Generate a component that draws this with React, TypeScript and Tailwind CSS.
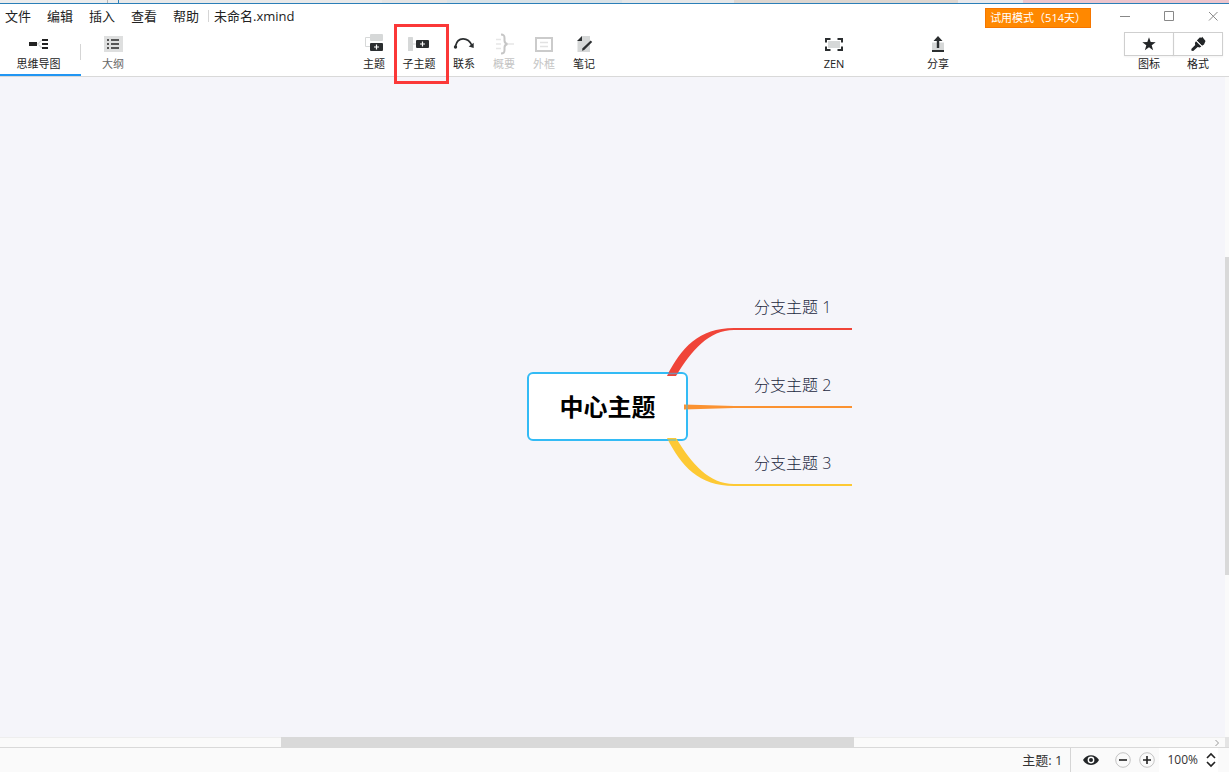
import type { ReactNode } from 'react';

const INK = '#2b2e30';
const PALE = '#d6d8d8';

function Icon({ children }: { children: ReactNode }) {
  return (
    <svg className="size-6 shrink-0" viewBox="0 0 24 24" fill="none" aria-hidden="true">
      {children}
    </svg>
  );
}

const MindMapIcon = () => (
  <Icon>
    <path d="M15 8.500c-2.500 0-2 3.500-5 3.500c3 0 2.500 3.500 5 3.500" stroke={PALE} strokeWidth="1.200" />
    <path d="M2 10h8v4H2zM15 7h6v2h-6zM15 11h6v2h-6zM15 15h6v2h-6z" fill="#222" />
  </Icon>
);

const OutlineIcon = () => (
  <Icon>
    <path d="M3 4h19v16H3z" fill="#dedfdf" />
    <path d="M6 7h2v2H6zM10 7h8v2h-8zM6 11h2v2H6zM10 11h8v2h-8zM6 15h2v2H6zM10 15h8v2h-8z" fill="#555" />
  </Icon>
);

const TopicIcon = () => (
  <Icon>
    <path d="M8 5.500H3.500v9H8" stroke={PALE} />
    <rect x="8" y="2" width="13" height="7" rx="1" fill={PALE} />
    <rect x="8" y="11" width="13" height="8" rx="1" fill={INK} />
    <path d="M14.500 12.500v5M12 15h5" stroke="#fff" strokeWidth="1.200" />
  </Icon>
);

const SubtopicIcon = () => (
  <Icon>
    <path d="M6 12h3" stroke={PALE} />
    <rect x="1" y="5" width="5" height="14" rx="0.500" fill={PALE} />
    <rect x="9" y="8" width="13" height="8" rx="1" fill={INK} />
    <path d="M15.500 9.500v5M13 12h5" stroke="#fff" strokeWidth="1.200" />
  </Icon>
);

const RelationIcon = () => (
  <Icon>
    <path d="M3.500 14C5.500 4.500 16 4.500 20 13.500" stroke={INK} strokeWidth="1.700" />
    <circle cx="3.500" cy="15" r="1.700" fill={INK} />
    <path d="M21.700 10.800v5.200l-5-1.400z" fill={INK} />
  </Icon>
);

const SummaryIcon = () => (
  <Icon>
    <path d="M4 7.500h5M4 12h5M4 16.500h5M16 12h6" stroke="#e6e6e6" strokeWidth="1.500" />
    <path d="M9 2.500c2.700 0 3.500.8 3.500 3.500v2.500c0 2 .8 3 3 3.500c-2.200.5-3 1.500-3 3.500V18c0 2.700-.8 3.500-3.500 3.500" stroke="#c6c6c6" strokeWidth="2" />
  </Icon>
);

const BoundaryIcon = () => (
  <Icon>
    <path d="M4 6h16v13H4z" stroke="#cbcbcb" strokeWidth="2" />
    <path d="M8 10.500h8M8 14.500h8" stroke="#e2e2e2" strokeWidth="1.500" />
  </Icon>
);

const NotesIcon = () => (
  <Icon>
    <path d="M10 4h8v16H5.500V9z" fill={PALE} />
    <path d="M10 4v5H5z" fill={INK} />
    <path d="M10 18.800l.5-2.500 8.200-7.800 1.500 1.600-8 7.900z" fill={INK} />
  </Icon>
);

const ZenIcon = () => (
  <Icon>
    <path d="M6 9h12v7H6z" fill={PALE} />
    <path d="M8.500 7H4v3.500M15.500 7H20v3.500M8.500 18H4v-3.500M15.500 18H20v-3.500" stroke={INK} strokeWidth="2" />
  </Icon>
);

const ShareIcon = () => (
  <Icon>
    <path d="M6 10.500h12V18H6z" fill={PALE} />
    <path d="M6 18h12v2H6zM12 4l4.500 5h-3.300v7h-2.400V9H7.500z" fill={INK} />
  </Icon>
);

const StarIcon = () => (
  <Icon>
    <path d="M12 5.300l1.700 4.800 5 .1-4 3.100 1.400 4.900L12 15.300l-4.100 2.900 1.400-4.900-4-3.100 5-.1z" fill="#222527" />
  </Icon>
);

const BrushIcon = () => (
  <Icon>
    <path d="M14 5.300l1.200.8 1-1.300 3.300 4.100-1.500 3.500-2 1.300-5.200-5.200z" fill="#222527" />
    <path d="M10 9.200l5.300 5.300-1.600 1-2-.5-4.500 3.900-1.700-.2-.2-1.700 3.900-4.100-.3-2z" fill="#222527" />
    <path d="M10.300 8.300l5.800 5.800" stroke="#fff" strokeWidth="0.600" />
  </Icon>
);

type Tool = { label: string; icon: ReactNode; disabled?: boolean; highlighted?: boolean };

const tools: Tool[] = [
  { label: '主题', icon: <TopicIcon /> },
  { label: '子主题', icon: <SubtopicIcon />, highlighted: true },
  { label: '联系', icon: <RelationIcon /> },
  { label: '概要', icon: <SummaryIcon />, disabled: true },
  { label: '外框', icon: <BoundaryIcon />, disabled: true },
  { label: '笔记', icon: <NotesIcon /> },
];

function ToolButton({ label, icon, disabled, highlighted }: Tool) {
  return (
    <button
      type="button"
      disabled={disabled}
      className={`relative flex flex-col items-center pt-1 text-[11px] leading-4 whitespace-nowrap ${
        highlighted ? 'w-[50px]' : 'w-10'
      } ${disabled ? 'text-[#c4c4c4]' : 'text-[#222]'}`}
    >
      {icon}
      {label}
      {highlighted && (
        <span className="pointer-events-none absolute -top-1 -right-[5px] -bottom-2 left-0 border-3 border-[#fb3838]" />
      )}
    </button>
  );
}

function TitleBar() {
  return (
    <div className="flex h-6 items-center text-[13px] leading-4 text-[#222]">
      <nav className="flex gap-4 pl-[5px]">
        {['文件', '编辑', '插入', '查看', '帮助'].map((item) => (
          <button key={item} type="button">
            {item}
          </button>
        ))}
      </nav>
      <span className="ml-[9px] h-3 border-l border-[#d5d5d5]" />
      <span className="pl-[5px]">未命名.xmind</span>
      <a
        href="#trial"
        className="mt-1 mr-[18px] ml-auto flex h-5 items-center border border-[#f57600] bg-[#ff8800] px-1 text-[11px] text-white"
      >
        试用模式（514天）
      </a>
      <div className="flex gap-3">
        <button type="button" aria-label="最小化" className="flex w-8 justify-center">
          <svg className="size-3" viewBox="0 0 12 12" stroke="#888" fill="none">
            <path d="M1 6.500h10" />
          </svg>
        </button>
        <button type="button" aria-label="最大化" className="flex w-8 justify-center">
          <svg className="size-3" viewBox="0 0 12 12" stroke="#888" fill="none">
            <path d="M1.500 1.500h9v9h-9z" />
          </svg>
        </button>
        <button type="button" aria-label="关闭" className="flex w-8 justify-center">
          <svg className="size-3" viewBox="0 0 12 12" stroke="#888" fill="none">
            <path d="M2 2l8.500 8.500M10.500 2L2 10.500" />
          </svg>
        </button>
      </div>
    </div>
  );
}

function Toolbar() {
  return (
    <div className="flex h-12 text-[11px] leading-4 text-[#222]">
      <button
        type="button"
        className="flex w-[81px] flex-col items-center border-b-2 border-[#2196f3] pt-1 pr-1"
      >
        <MindMapIcon />
        思维导图
      </button>
      <span className="mt-4 -ml-px h-4 border-l border-[#d5d5d5]" />
      <button type="button" className="flex w-16 flex-col items-center pt-1 text-[#666]">
        <OutlineIcon />
        大纲
      </button>
      <div className="flex-[209]" />
      <div className="flex">
        {tools.map((tool) => (
          <ToolButton key={tool.label} {...tool} />
        ))}
      </div>
      <div className="flex-[210]" />
      <div className="flex gap-16">
        <ToolButton label="ZEN" icon={<ZenIcon />} />
        <ToolButton label="分享" icon={<ShareIcon />} />
      </div>
      <div className="flex-[166]" />
      <div className="mr-1.5 flex pt-1">
        <button type="button" className="flex w-[50px] flex-col items-center">
          <span className="flex h-6 w-full items-center justify-center border border-[#cfcfcf] shadow-xs">
            <StarIcon />
          </span>
          图标
        </button>
        <button type="button" className="-ml-px flex w-[50px] flex-col items-center">
          <span className="flex h-6 w-full items-center justify-center border border-[#cfcfcf] shadow-xs">
            <BrushIcon />
          </span>
          格式
        </button>
      </div>
    </div>
  );
}

const branches = [
  { label: '分支主题 1', place: 'top-[10px]' },
  { label: '分支主题 2', place: 'top-[88px]' },
  { label: '分支主题 3', place: 'top-[166px]' },
];

function MindMap() {
  return (
    <div className="absolute top-1/2 left-[526px] -mt-[120px] h-[240px] w-[326px]">
      <div className="absolute top-[85px] left-px flex h-[69px] w-[161px] items-center justify-center rounded-md border-2 border-[#33bbf5] bg-white text-2xl font-bold text-black">
        中心主题
      </div>
      <svg className="absolute inset-0 size-full" viewBox="0 0 326 240" fill="none" aria-hidden="true">
        <path d="M141 89C155 61 173 41 208 41H326V43H208C183 43 166 63 150 89Z" fill="#f04438" />
        <path d="M158 117.500L208 119H326V121H208L158 122.500Z" fill="#fb9231" />
        <path d="M141 151C155 179 173 199 208 199H326V197H208C183 197 166 177 150 151Z" fill="#fdc934" />
        <path d="M142 86.500h10M142 153h8M161 117v6" stroke="#33bbf5" strokeWidth="1.500" opacity="0.600" />
      </svg>
      {branches.map((branch) => (
        <div
          key={branch.label}
          className={`absolute left-[228px] text-base leading-5 font-light whitespace-nowrap text-[#1c2840] ${branch.place}`}
        >
          {branch.label}
        </div>
      ))}
    </div>
  );
}

function StatusBar() {
  return (
    <footer className="flex h-6 items-center bg-[#fafafa] pr-[11px] text-[13px] leading-4 text-[#333]">
      <span className="ml-auto pr-2">主题: 1</span>
      <span className="h-full border-l border-[#d5d5d5]" />
      <button type="button" aria-label="显示" className="ml-3">
        <svg className="size-4" viewBox="0 0 16 16" aria-hidden="true">
          <path d="M0 8C3.500 1.500 12.500 1.500 16 8C12.500 14.500 3.500 14.500 0 8Z" fill="#222527" />
          <circle cx="8" cy="8" r="3.400" fill="#fff" />
          <circle cx="8" cy="8" r="2" fill="#222527" />
        </svg>
      </button>
      <button type="button" aria-label="缩小" className="ml-4">
        <svg className="size-4" viewBox="0 0 16 16" fill="none">
          <circle cx="8" cy="8" r="7.300" stroke="#c4c4c4" />
          <path d="M4 8h8" stroke="#222" strokeWidth="1.600" />
        </svg>
      </button>
      <button type="button" aria-label="放大" className="ml-2">
        <svg className="size-4" viewBox="0 0 16 16" fill="none">
          <circle cx="8" cy="8" r="7.300" stroke="#c4c4c4" />
          <path d="M4 8h8M8 4v8" stroke="#222" strokeWidth="1.600" />
        </svg>
      </button>
      <button type="button" className="ml-1 flex h-full items-center gap-2 bg-white pr-0.5 pl-2 text-xs">
        100%
        <svg className="h-4 w-2.5" viewBox="0 0 10 16" fill="none" stroke="#222" strokeWidth="1.600">
          <path d="M1 6l4-4 4 4M1 10l4 4 4-4" />
        </svg>
      </button>
    </footer>
  );
}

export default function App() {
  return (
    <div className="flex h-screen flex-col bg-white font-['Open_Sans','Noto_Sans_CJK_SC',sans-serif]">
      <header className="relative z-10 border-b border-[#d9d9d9] bg-white">
        <div className="flex h-1 border-b border-[#2b7fb8]">
          <div className="flex-[107] bg-[#ececec]" />
          <div className="flex-[10] border-l border-[#b5b5b5] bg-[#ececec]" />
          <div className="flex-[264] border-l border-[#2b7fb8] bg-[#e9e9e9]" />
          <div className="flex-[65] bg-[#e4e4e4]" />
          <div className="flex-[175] bg-[#d9e2e7]" />
          <div className="flex-[112] bg-[#e6e7e8]" />
          <div className="flex-[225] bg-[#ddd6d0]" />
          <div className="flex-[65] bg-[#e9e9ec]" />
          <div className="flex-[206] bg-[#ecc5cd]" />
        </div>
        <TitleBar />
        <Toolbar />
      </header>
      <div className="flex min-h-0 flex-1">
        <main className="relative min-w-0 flex-1 overflow-hidden bg-[#f5f5fa]">
          <MindMap />
        </main>
        <div className="flex w-1 flex-col bg-[#fafafa]">
          <div className="flex-[180]" />
          <div className="flex-[318] bg-[#d9d9d9]" />
          <div className="flex-[162]" />
        </div>
      </div>
      <div className="flex h-[11px] border-b border-[#d9d9d9] bg-[#fafafa]">
        <div className="flex-[281] border-t border-[#eee]" />
        <div className="-mb-px flex-[573] bg-[#d9d9d9]" />
        <div className="flex flex-[371] items-center justify-end border-t border-[#eee]">
          <svg className="mr-1 size-2" viewBox="0 0 8 8" fill="none" stroke="#999">
            <path d="M2.500 1l3 3-3 3" />
          </svg>
        </div>
        <div className="w-1 bg-[#e4e4e4]" />
      </div>
      <StatusBar />
    </div>
  );
}
